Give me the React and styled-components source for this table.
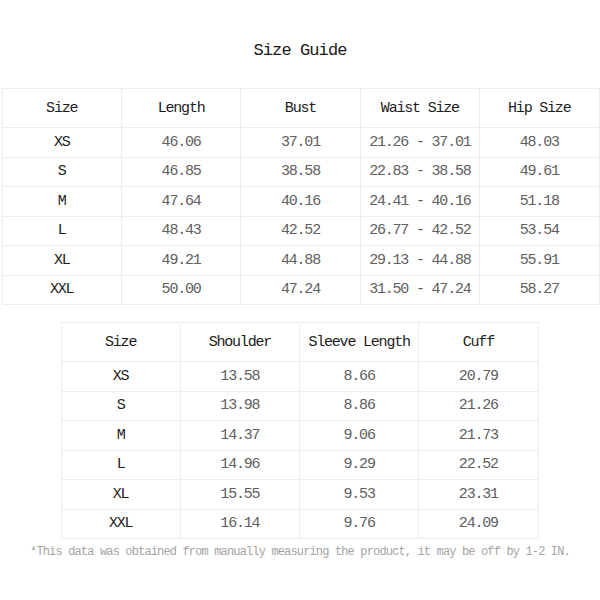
import React from 'react';
import styled, { createGlobalStyle } from 'styled-components';

const GlobalStyle = createGlobalStyle`
  html, body {
    margin: 0;
    padding: 0;
    background: #ffffff;
  }
  body {
    font-family: 'Liberation Mono', 'DejaVu Sans Mono', monospace;
  }
`;

const Page = styled.div`
  width: 600px;
  height: 600px;
  display: flex;
  flex-direction: column;
  align-items: center;
  background: #ffffff;
`;

const Title = styled.h1`
  margin: 39px 0 0;
  height: 24px;
  font-size: 17px;
  letter-spacing: -0.9px;
  line-height: 24px;
  font-weight: 400;
  color: #1a1a1a;
`;

const Table = styled.table`
  border-collapse: collapse;
  table-layout: fixed;
  width: ${(p) => p.$width}px;
  margin: ${(p) => p.$top}px 0 0 ${(p) => p.$shift}px;
  border: 1px solid #ececec;
`;

const HeadCell = styled.th`
  height: 38px;
  padding: 0;
  font-size: 15px;
  letter-spacing: -1.2px;
  font-weight: 400;
  color: #1c1c1c;
  text-align: center;
  border: 1px solid #ececec;
`;

const Cell = styled.td`
  height: 28.5px;
  padding: 0;
  font-size: 15px;
  letter-spacing: -1.2px;
  color: ${(p) => (p.$first ? '#1c1c1c' : '#606060')};
  text-align: center;
  border: 1px solid #ececec;
`;

const Note = styled.p`
  margin: 6px 0 0;
  font-size: 12px;
  letter-spacing: -0.85px;
  color: #a4a4a4;
  white-space: nowrap;
`;

const bodyTable = {
  head: ['Size', 'Length', 'Bust', 'Waist Size', 'Hip Size'],
  rows: [
    ['XS', '46.06', '37.01', '21.26 - 37.01', '48.03'],
    ['S', '46.85', '38.58', '22.83 - 38.58', '49.61'],
    ['M', '47.64', '40.16', '24.41 - 40.16', '51.18'],
    ['L', '48.43', '42.52', '26.77 - 42.52', '53.54'],
    ['XL', '49.21', '44.88', '29.13 - 44.88', '55.91'],
    ['XXL', '50.00', '47.24', '31.50 - 47.24', '58.27'],
  ],
};

const sleeveTable = {
  head: ['Size', 'Shoulder', 'Sleeve Length', 'Cuff'],
  rows: [
    ['XS', '13.58', '8.66', '20.79'],
    ['S', '13.98', '8.86', '21.26'],
    ['M', '14.37', '9.06', '21.73'],
    ['L', '14.96', '9.29', '22.52'],
    ['XL', '15.55', '9.53', '23.31'],
    ['XXL', '16.14', '9.76', '24.09'],
  ],
};

function SizeTable({ data, width, top, shift }) {
  return (
    <Table $width={width} $top={top} $shift={shift}>
      <thead>
        <tr>
          {data.head.map((h) => (
            <HeadCell key={h}>{h}</HeadCell>
          ))}
        </tr>
      </thead>
      <tbody>
        {data.rows.map((row) => (
          <tr key={row[0]}>
            {row.map((v, i) => (
              <Cell key={i} $first={i === 0}>
                {v}
              </Cell>
            ))}
          </tr>
        ))}
      </tbody>
    </Table>
  );
}

export default function App() {
  return (
    <Page>
      <GlobalStyle />
      <Title>Size Guide</Title>
      <SizeTable data={bodyTable} width={598} top={25} shift={1} />
      <SizeTable data={sleeveTable} width={478} top={17} shift={-1} />
      <Note>*This data was obtained from manually measuring the product, it may be off by 1-2 IN.</Note>
    </Page>
  );
}
